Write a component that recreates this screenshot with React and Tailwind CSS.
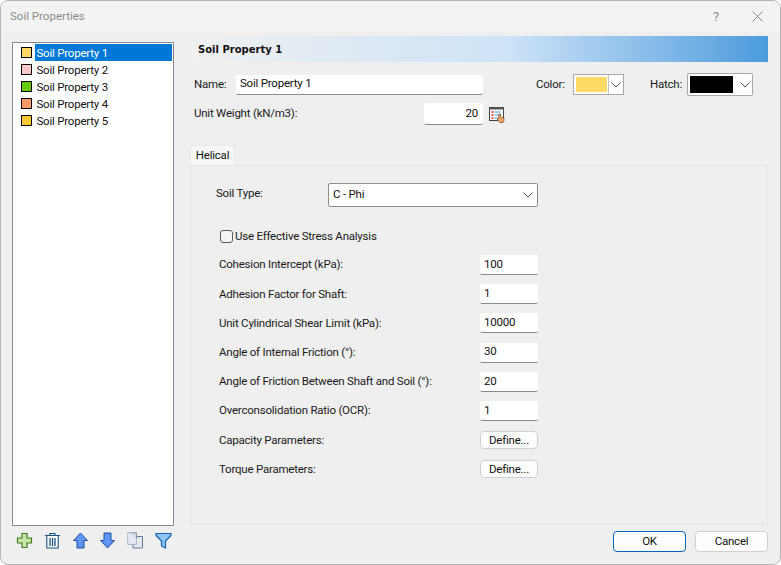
const font = { fontFamily: 'Roboto, sans-serif' };

const items = [
  ['Soil Property 1', 'bg-[#ffd966]', true],
  ['Soil Property 2', 'bg-[#ffc8c8]', false],
  ['Soil Property 3', 'bg-[#66cc00]', false],
  ['Soil Property 4', 'bg-[#ff9966]', false],
  ['Soil Property 5', 'bg-[#ffc832]', false],
];

const rows = [
  ['Cohesion Intercept (kPa):', '100'],
  ['Adhesion Factor for Shaft:', '1'],
  ['Unit Cylindrical Shear Limit (kPa):', '10000'],
  ['Angle of Internal Friction (°):', '30'],
  ['Angle of Friction Between Shaft and Soil (°):', '20'],
  ['Overconsolidation Ratio (OCR):', '1'],
];

function Chevron({ className = '' }) {
  return (
    <svg width="10" height="6" viewBox="0 0 10 6" className={className} fill="none" stroke="#555" strokeWidth="1">
      <path d="M0.5 0.5 L5 5 L9.5 0.5" />
    </svg>
  );
}

function Input({ value, className = '', right = false }) {
  return (
    <div className={`bg-white border-b border-b-[#8b8b8b] rounded-[2px] flex items-center pl-[4px] text-[#111] ${right ? 'justify-end pr-[5px]' : ''} ${className}`}>
      {value}
    </div>
  );
}

function Btn({ children, className = '' }) {
  return (
    <div className={`bg-[#fdfdfd] border border-[#d0d0d0] rounded-[4px] flex items-center justify-center text-[#111] ${className}`}>
      {children}
    </div>
  );
}

function Toolbar() {
  return (
    <div className="flex items-center gap-[10.800px] pl-[4px] h-[17px] mt-[6px]">
      <svg width="17" height="17" viewBox="0 0 17 17">
        <path d="M6 1.500h5v4.500h4.500v5H11v4.500H6V11H1.500V6H6z" fill="#c8e6a8" stroke="#3f7f1f" strokeWidth="1.200" />
      </svg>
      <svg width="17" height="17" viewBox="0 0 17 17" fill="none" stroke="#1a4f7f" strokeWidth="1.100">
        <path d="M1 3.500h15M6 3.500V1.500h5v2" />
        <path d="M2.800 3.500v12.500h11.400V3.500z" fill="#fff" />
        <path d="M6 6v8M8.500 6v8M11 6v8" strokeWidth="1.300" />
      </svg>
      <svg width="17" height="17" viewBox="0 0 17 17">
        <path d="M8.500 1 L15.500 8.500 H12 V16 H5 V8.500 H1.500z" fill="#5f96f5" stroke="#1d4f9f" strokeWidth="1" />
      </svg>
      <svg width="17" height="17" viewBox="0 0 17 17">
        <path d="M8.500 16 L15.500 8.500 H12 V1 H5 V8.500 H1.500z" fill="#5f96f5" stroke="#1d4f9f" strokeWidth="1" />
      </svg>
      <svg width="17" height="17" viewBox="0 0 17 17">
        <path d="M6 4.500h9.500v11.500H6z" fill="#e4e8f0" stroke="#66789a" strokeWidth="1" />
        <path d="M1 0.800h8.500v11.500H1z" fill="#cfd8e8" stroke="#8a98b0" strokeWidth="1" />
        <path d="M3 0.800l6.500 6.500v5H1V.8z" fill="#e8edf5" opacity="0.800" />
      </svg>
      <svg width="17" height="17" viewBox="0 0 17 17">
        <path d="M1 1.500h15v2L10.500 9v7L6.500 14V9L1 3.500z" fill="#8cc4f4" stroke="#1a5fb0" strokeWidth="1.200" />
      </svg>
    </div>
  );
}

function ListHandIcon() {
  return (
    <svg width="17" height="16" viewBox="0 0 17 16">
      <rect x="0.500" y="0.500" width="14" height="13" fill="#fff" stroke="#444" />
      <rect x="0.500" y="0.500" width="14" height="2" fill="#555" />
      <path d="M2.500 5h2M2.500 8h2M2.500 11h2" stroke="#e01818" strokeWidth="1.500" />
      <path d="M5.500 5h6M5.500 8h5M5.500 11h3" stroke="#3a90e0" strokeWidth="1" />
      <path d="M10 7h1.500v3.200l3.500 .8v2.700l-1 1.800h-3.200L8 12l1.500-.3z" fill="#f0a868" stroke="#7a4420" strokeWidth="0.700" />
    </svg>
  );
}

export default function App() {
  return (
    <div style={font} className="w-[781px] h-[565px] bg-[#efefef] border border-[#b4b4b4] rounded-[8px] overflow-hidden flex flex-col text-[11.5px] tracking-[-0.22px] text-[#1a1a1a] antialiased">
      <div className="h-[31px] bg-[#f3f3f3] flex items-center justify-between pl-[9px] pr-[17px] shrink-0">
        <span className="text-[11.5px] tracking-normal text-[#8c8c8c]">Soil Properties</span>
        <div className="flex items-center gap-[33px]">
          <span className="text-[13px] text-[#8c8c8c]">?</span>
          <svg width="11" height="11" viewBox="0 0 11 11" stroke="#8c8c8c" strokeWidth="1" fill="none">
            <path d="M0.500 0.500 L10.500 10.500 M10.500 0.500 L0.500 10.500" />
          </svg>
        </div>
      </div>

      <div className="flex-1 flex min-h-0">
        <div className="w-[189px] pl-[11px] shrink-0 flex flex-col">
          <div className="mt-[10px] w-[162px] h-[484px] bg-white border border-[#858b96] pt-[1px] pl-[8px] pr-[1px]">
            {items.map(([label, color, sel]) => (
              <div key={label} className="h-[17px] flex items-center">
                <span className={`w-[11px] h-[11px] border border-black shrink-0 ${color}`} />
                <span className={`ml-[3px] flex-1 h-[17px] pl-[1.500px] flex items-center ${sel ? 'bg-[#0078d7] text-white' : 'text-[#111]'}`}>
                  <span className="translate-y-[1px]">{label}</span>
                </span>
              </div>
            ))}
          </div>
          <Toolbar />
        </div>

        <div className="flex-1 pr-[12px] flex flex-col min-w-0">
          <div className="mt-[4px] h-[26px] flex items-center pl-[8px] bg-gradient-to-r from-[#f0f0f0] via-[#cde3f7] via-55% to-[#4a9bdc]">
            <span className="font-bold text-[10px] tracking-normal text-[#111]" style={{ fontFamily: '"DejaVu Sans", sans-serif' }}>Soil Property 1</span>
          </div>

          <div className="flex items-center mt-[11px] h-[23px]">
            <span className="w-[46px] pl-[4px]">Name:</span>
            <Input value="Soil Property 1" className="w-[247px] h-[20px]" />
            <span className="ml-[53px] w-[37px]">Color:</span>
            <div className="w-[51px] h-[21px] border border-[#a8a8a8] bg-white flex items-center pl-[2px]">
              <span className="w-[31px] h-[15px] bg-[#ffd966]" />
              <span className="ml-[1px] flex-1 h-full border-l border-[#c4c4c4] flex items-center justify-center"><Chevron /></span>
            </div>
            <span className="ml-[26px] w-[37px]">Hatch:</span>
            <div className="w-[66px] h-[23px] border border-[#a8a8a8] rounded-[2px] bg-white flex items-center pl-[2px]">
              <span className="w-[43px] h-[17px] bg-black" />
              <Chevron className="ml-[7px]" />
            </div>
          </div>

          <div className="flex items-center mt-[7px] h-[22px]">
            <span className="w-[234px] pl-[4px]">Unit Weight (kN/m3):</span>
            <Input value="20" right className="w-[59px] h-[22px]" />
            <span className="ml-[6px] translate-y-[1px]"><ListHandIcon /></span>
          </div>

          <div className="mt-[20px] flex">
            <div className="w-[45px] h-[20px] bg-[#f6f6f6] border border-b-0 border-[#e8e8e8] flex items-center justify-center text-[#111]">Helical</div>
          </div>
          <div className="h-[360px] border border-[#e6e6e6] bg-[#efefef] ml-[1px] pt-[17px] flex flex-col">
            <div className="flex items-start">
              <span className="ml-[24px] w-[112px] pt-[2px]">Soil Type:</span>
              <div className="w-[210px] h-[24px] bg-white border border-[#8d8d8d] rounded-[2px] flex items-center justify-between pl-[4px] pr-[4px] text-[#111]">
                <span>C - Phi</span>
                <Chevron />
              </div>
            </div>

            <div className="flex items-center mt-[22px] ml-[28px] h-[15px]">
              <span className="w-[13px] h-[13px] border border-[#5a5a5a] rounded-[3px] bg-[#f4f4f4]" />
              <span className="ml-[2px]">Use Effective Stress Analysis</span>
            </div>

            <div className="mt-[11px] ml-[27px] flex flex-col gap-[9.200px]">
              {rows.map(([label, value]) => (
                <div key={label} className="flex items-center h-[20px]">
                  <span className="w-[261px]">{label}</span>
                  <Input value={value} className="w-[58px] h-[20px]" />
                </div>
              ))}
              {['Capacity Parameters:', 'Torque Parameters:'].map((label) => (
                <div key={label} className="flex items-center h-[20px]">
                  <span className="w-[261px]">{label}</span>
                  <Btn className="w-[58px] h-[18px]">Define...</Btn>
                </div>
              ))}
            </div>
          </div>

          <div className="mt-[6px] flex justify-end gap-[9px]">
            <Btn className="w-[73px] h-[21px] !border-[#0067c0]">OK</Btn>
            <Btn className="w-[73px] h-[21px]">Cancel</Btn>
          </div>
        </div>
      </div>
    </div>
  );
}
